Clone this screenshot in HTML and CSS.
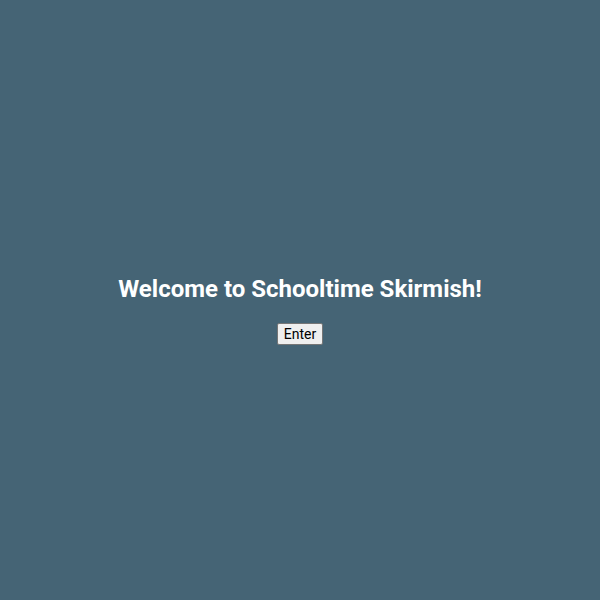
FILE: index.html
```html
<!DOCTYPE html>
<html lang="en">

<head>
    <meta charset="UTF-8">
    <meta name="viewport" content="width=device-width, initial-scale=1.0">
    <link rel="stylesheet" href="styles.css">
    <title>Schooltime Skirmish</title>
</head>

<body>
    <div class="welcome">
        <h1 class="welcome-title">Welcome to Schooltime Skirmish!</h1>
        <button class="enter-button" type="button">Enter</button>
    </div>
</body>

</html>
```

FILE: styles.css
```css
/* Page background and centering */
body {
    font-family: Roboto, "Liberation Sans", sans-serif;
    margin: 0;
    padding: 0;
    background-color: #456475;
    display: flex;
    align-items: center;
    justify-content: center;
    min-height: 100vh;
}

/* Welcome block */
.welcome {
    display: flex;
    flex-direction: column;
    align-items: center;
    padding: 40px 20px 20px;
}

.welcome-title {
    color: white;
    font-size: 24px;
    font-weight: bold;
    margin: 0 0 20px;
}

.enter-button {
    font-family: Roboto, "Liberation Sans", sans-serif;
    font-size: 14px;
    color: black;
    background-color: #efefef;
    border: 1px solid #767676;
    border-radius: 2px;
    padding: 2px 6px;
    cursor: pointer;
}
```
